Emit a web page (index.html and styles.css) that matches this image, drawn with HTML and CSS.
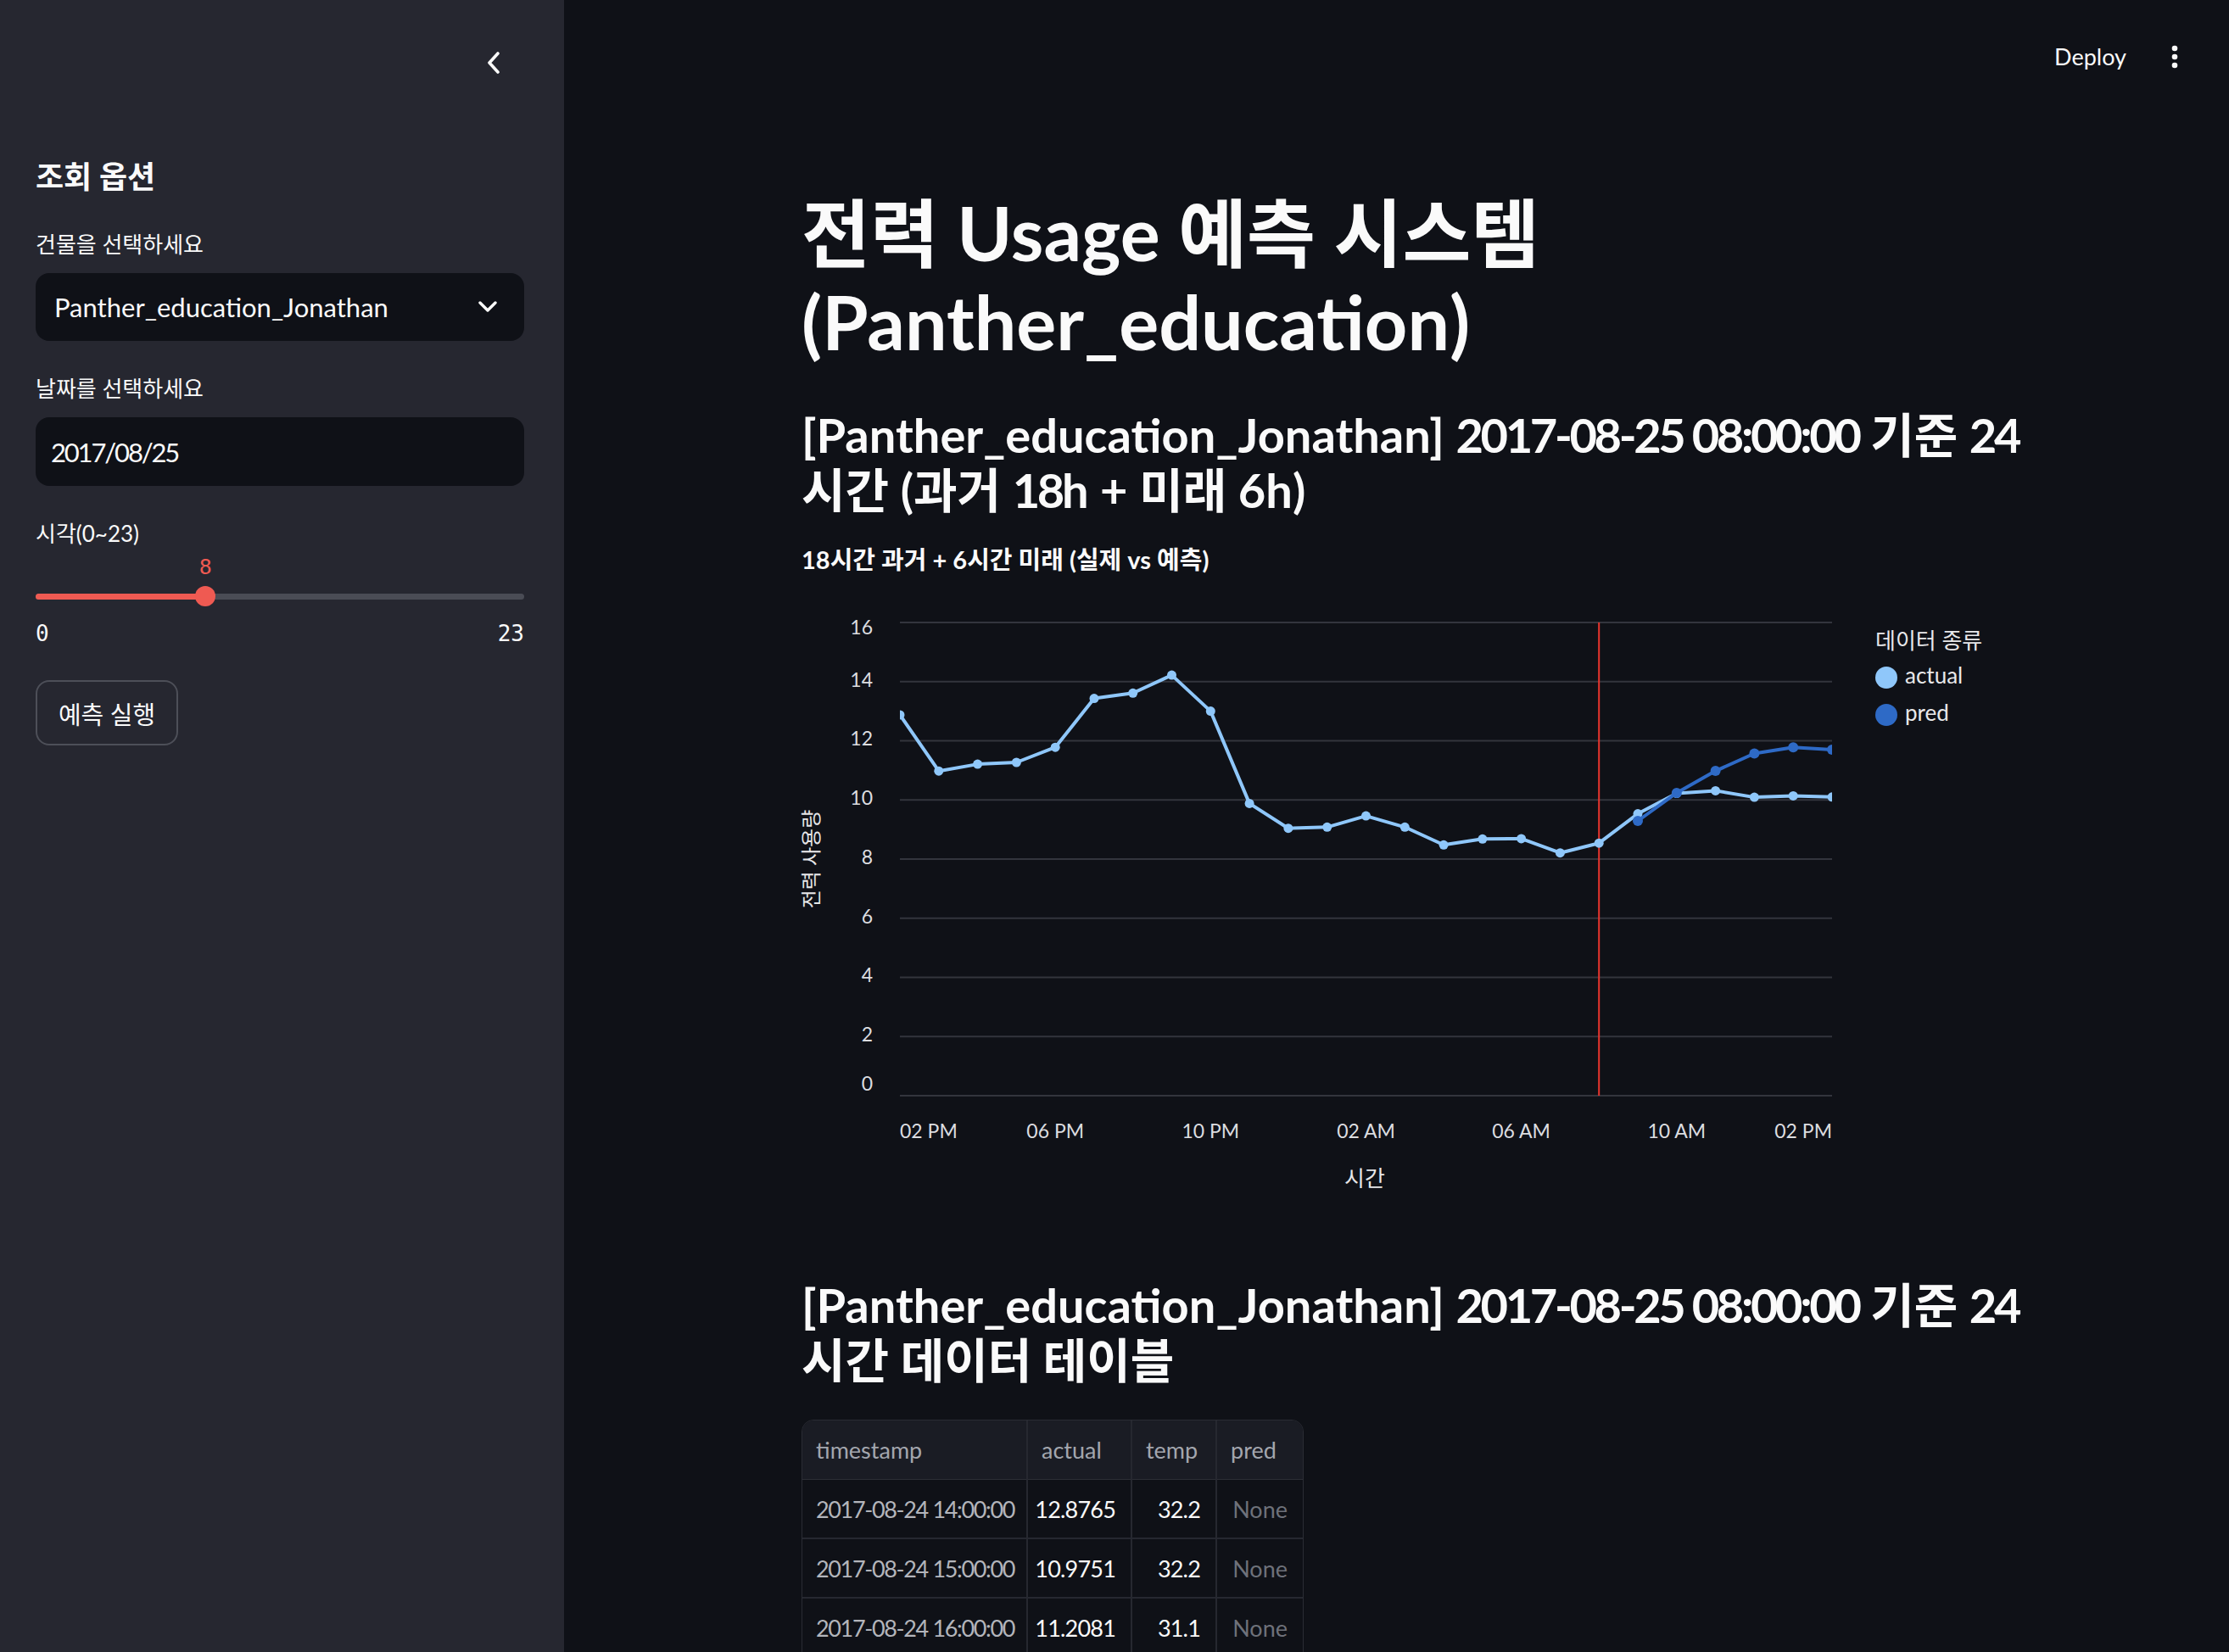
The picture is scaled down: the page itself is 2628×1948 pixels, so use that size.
FILE: index.html
```html
<!DOCTYPE html>
<html lang="ko">
<head>
<meta charset="utf-8">
<title>전력 Usage 예측 시스템</title>
<link rel="stylesheet" href="styles.css">
</head>
<body>
<aside class="sidebar">
  <div class="sb-top">
    <svg class="collapse" width="18" height="26" viewBox="0 0 18 26"><path d="M14 2 L4 13 L14 24" fill="none" stroke="#fafafa" stroke-width="3.6" stroke-linecap="round" stroke-linejoin="round"/></svg>
  </div>
  <div class="sb-title">조회 옵션</div>

  <div class="label">건물을 선택하세요</div>
  <div class="select">
    <span>Panther_education_Jonathan</span>
    <svg width="22" height="14" viewBox="0 0 22 14"><path d="M2 2 L11 11 L20 2" fill="none" stroke="#fafafa" stroke-width="3.4" stroke-linecap="round" stroke-linejoin="round"/></svg>
  </div>

  <div class="label">날짜를 선택하세요</div>
  <div class="date"><span class="date-text">2017/08/25</span></div>

  <div class="label label-slider">시각(0~23)</div>
  <div class="slider">
    <div class="slider-value-row"><span class="slider-value" style="left:34.78%">8</span></div>
    <div class="slider-track-row">
      <div class="track"><div class="fill" style="width:34.78%"></div><div class="thumb" style="left:34.78%"></div></div>
    </div>
    <div class="slider-minmax"><span>0</span><span>23</span></div>
  </div>

  <button class="run-btn">예측 실행</button>
</aside>

<main class="main">
  <header class="topbar">
    <span class="deploy">Deploy</span>
    <svg class="kebab" width="10" height="30" viewBox="0 0 10 30"><circle cx="5" cy="5" r="3.3" fill="#fafafa"/><circle cx="5" cy="15" r="3.3" fill="#fafafa"/><circle cx="5" cy="25" r="3.3" fill="#fafafa"/></svg>
  </header>

  <section class="content">
    <h1 class="title">전력 Usage 예측 시스템<br>(Panther_education)</h1>
    <h3 class="subtitle">[Panther_education_Jonathan] <span class="tnum">2017-08-25 08:00:00</span> 기준 <span class="tnum">24</span><br>시간 (과거 <span class="tnum">18</span>h + 미래 6h)</h3>
    <div class="chart-title">18시간 과거 + 6시간 미래 (실제 vs 예측)</div>

    <svg class="chart" width="1460" height="730" viewBox="-20 0 1460 730">
      <defs>
        <clipPath id="plotclip"><rect x="116" y="0" width="1099" height="600"/></clipPath>
      </defs>
      <g class="grid" stroke="#33353d" stroke-width="2">
        <line x1="116" x2="1215" y1="34" y2="34"/>
        <line x1="116" x2="1215" y1="103.75" y2="103.75"/>
        <line x1="116" x2="1215" y1="173.5" y2="173.5"/>
        <line x1="116" x2="1215" y1="243.25" y2="243.25"/>
        <line x1="116" x2="1215" y1="313" y2="313"/>
        <line x1="116" x2="1215" y1="382.75" y2="382.75"/>
        <line x1="116" x2="1215" y1="452.5" y2="452.5"/>
        <line x1="116" x2="1215" y1="522.25" y2="522.25"/>
        <line x1="116" x2="1215" y1="592" y2="592"/>
      </g>
      <g class="ylabels" text-anchor="end">
        <text x="84" y="42">16</text>
        <text x="84" y="103.75">14</text>
        <text x="84" y="173.5">12</text>
        <text x="84" y="243.25">10</text>
        <text x="84" y="313">8</text>
        <text x="84" y="382.75">6</text>
        <text x="84" y="452.5">4</text>
        <text x="84" y="522.25">2</text>
        <text x="84" y="580">0</text>
      </g>
      <text class="ytitle" transform="translate(14,313) rotate(-90)" text-anchor="middle">전력 사용량</text>
      <g class="xlabels">
        <text x="116" y="636" text-anchor="start">02 PM</text>
        <text x="299.2" y="636" text-anchor="middle">06 PM</text>
        <text x="482.3" y="636" text-anchor="middle">10 PM</text>
        <text x="665.5" y="636" text-anchor="middle">02 AM</text>
        <text x="848.6" y="636" text-anchor="middle">06 AM</text>
        <text x="1031.8" y="636" text-anchor="middle">10 AM</text>
        <text x="1215" y="636" text-anchor="end">02 PM</text>
      </g>
      <text class="xtitle" x="664" y="692" text-anchor="middle">시간</text>

      <line x1="940.2" x2="940.2" y1="34" y2="592" stroke="#e8352e" stroke-width="2"/>

      <g clip-path="url(#plotclip)">
        <polyline fill="none" stroke="#8fc7fa" stroke-width="4" stroke-linejoin="round" points="116,142.9 161.8,209.2 207.6,201.1 253.4,199 299.2,181.2 345,123.6 390.7,117.3 436.5,96.1 482.3,138.6 528.1,247.4 573.9,276.7 619.7,275.3 665.5,262.1 711.3,275.3 757.1,296.3 802.9,289.3 848.6,288.9 894.4,305.7 940.2,294.2 986,259.6 1031.8,235.6 1077.6,232.4 1123.4,240.1 1169.2,238.4 1215,239.8"/>
        <g fill="#8fc7fa">
          <circle cx="116" cy="142.9" r="5.5"/><circle cx="161.8" cy="209.2" r="5.5"/><circle cx="207.6" cy="201.1" r="5.5"/><circle cx="253.4" cy="199" r="5.5"/><circle cx="299.2" cy="181.2" r="5.5"/><circle cx="345" cy="123.6" r="5.5"/><circle cx="390.7" cy="117.3" r="5.5"/><circle cx="436.5" cy="96.1" r="5.5"/><circle cx="482.3" cy="138.6" r="5.5"/><circle cx="528.1" cy="247.4" r="5.5"/><circle cx="573.9" cy="276.7" r="5.5"/><circle cx="619.7" cy="275.3" r="5.5"/><circle cx="665.5" cy="262.1" r="5.5"/><circle cx="711.3" cy="275.3" r="5.5"/><circle cx="757.1" cy="296.3" r="5.5"/><circle cx="802.9" cy="289.3" r="5.5"/><circle cx="848.6" cy="288.9" r="5.5"/><circle cx="894.4" cy="305.7" r="5.5"/><circle cx="940.2" cy="294.2" r="5.5"/><circle cx="986" cy="259.6" r="5.5"/><circle cx="1031.8" cy="235.6" r="5.5"/><circle cx="1077.6" cy="232.4" r="5.5"/><circle cx="1123.4" cy="240.1" r="5.5"/><circle cx="1169.2" cy="238.4" r="5.5"/><circle cx="1215" cy="239.8" r="5.5"/>
        </g>
        <polyline fill="none" stroke="#2e6ac6" stroke-width="4" stroke-linejoin="round" points="986,268 1031.8,234.9 1077.6,209.1 1123.4,188.5 1169.2,181.2 1215,184"/>
        <g fill="#2e6ac6">
          <circle cx="986" cy="268" r="6"/><circle cx="1031.8" cy="234.9" r="6"/><circle cx="1077.6" cy="209.1" r="6"/><circle cx="1123.4" cy="188.5" r="6"/><circle cx="1169.2" cy="181.2" r="6"/><circle cx="1215" cy="184" r="6"/>
        </g>
      </g>

      <g class="legend">
        <text class="legend-title" x="1266" y="58">데이터 종류</text>
        <circle cx="1279" cy="99" r="13" fill="#8fc7fa"/>
        <text x="1301" y="99">actual</text>
        <circle cx="1279" cy="143" r="13" fill="#2e6ac6"/>
        <text x="1301" y="143">pred</text>
      </g>
    </svg>

    <h3 class="subtitle subtitle-table">[Panther_education_Jonathan] <span class="tnum">2017-08-25 08:00:00</span> 기준 <span class="tnum">24</span><br>시간 데이터 테이블</h3>

    <div class="table">
      <div class="th">timestamp</div><div class="th">actual</div><div class="th">temp</div><div class="th">pred</div>
      <div class="td ts">2017-08-24 14:00:00</div><div class="td num">12.8765</div><div class="td num">32.2</div><div class="td num none">None</div>
      <div class="td ts">2017-08-24 15:00:00</div><div class="td num">10.9751</div><div class="td num">32.2</div><div class="td num none">None</div>
      <div class="td ts">2017-08-24 16:00:00</div><div class="td num">11.2081</div><div class="td num">31.1</div><div class="td num none">None</div>
    </div>
  </section>
</main>
</body>
</html>
```

FILE: styles.css
```css
* { box-sizing: border-box; }

html, body {
  margin: 0;
  padding: 0;
}

body {
  width: 2628px;
  height: 1948px;
  overflow: hidden;
  display: flex;
  background: #0f1117;
  color: #fafafa;
  font-family: "Lato", "Noto Sans CJK KR", sans-serif;
}

.tnum {
  letter-spacing: -0.06em;
}

/* ---------- Sidebar ---------- */
.sidebar {
  width: 665px;
  flex: none;
  background: #262730;
  padding: 50px 47px 0 42px;
  display: flex;
  flex-direction: column;
}

.sb-top {
  height: 48px;
  display: flex;
  justify-content: flex-end;
  align-items: center;
  padding-right: 27px;
}

.sb-title {
  margin-top: 86px;
  font-size: 36px;
  font-weight: 700;
  line-height: 48px;
}

.label {
  margin-top: 38px;
  margin-bottom: 16px;
  font-size: 26px;
  line-height: 36px;
  color: #fafafa;
}

.select {
  height: 80px;
  background: #0f1117;
  border-radius: 16px;
  display: flex;
  align-items: center;
  justify-content: space-between;
  padding: 0 32px 0 22px;
  font-size: 31px;
}

.date {
  height: 81px;
  background: #0f1117;
  border-radius: 16px;
  display: flex;
  align-items: center;
  padding: 0 18px;
  font-size: 31px;
}

.date-text {
  letter-spacing: -0.07em;
}

.label-slider {
  margin-bottom: 0;
}

.slider-value-row {
  position: relative;
  height: 43px;
}

.slider-value {
  position: absolute;
  top: 0;
  transform: translateX(-50%);
  font-family: "DejaVu Sans Mono", "Liberation Mono", monospace;
  font-size: 25px;
  line-height: 43px;
  color: #ef5a52;
}

.slider-track-row {
  height: 26px;
  display: flex;
  align-items: center;
}

.track {
  position: relative;
  width: 100%;
  height: 7px;
  border-radius: 4px;
  background: #4a4c55;
}

.fill {
  height: 100%;
  border-radius: 4px;
  background: #ef5a52;
}

.thumb {
  position: absolute;
  top: 50%;
  width: 24px;
  height: 24px;
  border-radius: 50%;
  background: #ef5a52;
  transform: translate(-50%, -50%);
}

.slider-minmax {
  margin-top: 16px;
  height: 30px;
  display: flex;
  justify-content: space-between;
  font-family: "DejaVu Sans Mono", "Liberation Mono", monospace;
  font-size: 26px;
  line-height: 30px;
}

.run-btn {
  margin-top: 40px;
  align-self: flex-start;
  width: 168px;
  height: 77px;
  background: transparent;
  border: 2px solid #4d4f58;
  border-radius: 16px;
  color: #fafafa;
  font-family: "Lato", "Noto Sans CJK KR", sans-serif;
  font-size: 29px;
  padding: 0;
}

/* ---------- Main ---------- */
.main {
  flex: 1;
  display: flex;
  flex-direction: column;
  min-width: 0;
}

.topbar {
  height: 134px;
  flex: none;
  display: flex;
  justify-content: flex-end;
  align-items: center;
  gap: 52px;
  padding-right: 59px;
}

.deploy {
  font-size: 27px;
  line-height: 40px;
}

.content {
  padding: 88px 0 0 280px;
  display: flex;
  flex-direction: column;
  align-items: flex-start;
}

.title {
  margin: 0;
  font-size: 88px;
  line-height: 105px;
  font-weight: 700;
}

.subtitle {
  margin: 48px 0 0;
  font-size: 56px;
  line-height: 65px;
  font-weight: 700;
  white-space: nowrap;
}

.subtitle-table {
  margin-top: 76px;
}

.chart-title {
  margin-top: 32px;
  font-size: 29px;
  line-height: 36px;
  font-weight: 700;
}

.chart {
  margin-top: 22px;
  margin-left: -20px;
  display: block;
  font-family: "Lato", "Noto Sans CJK KR", sans-serif;
}

.chart text {
  dominant-baseline: middle;
}

.ylabels text, .xlabels text {
  font-size: 23px;
  fill: #dcdde0;
}

.ytitle {
  font-size: 24px;
  fill: #e6e6e8;
}

.xtitle {
  font-size: 26px;
  fill: #e6e6e8;
}

.legend text {
  font-size: 26px;
  fill: #e8e8ea;
}

/* ---------- Table ---------- */
.table {
  margin-top: 38px;
  display: grid;
  grid-template-columns: 266px 123px 100px 101px;
  grid-auto-rows: 70px;
  border: 1px solid #2a2c34;
  border-radius: 14px 14px 0 0;
  overflow: hidden;
  font-size: 27px;
}

.th, .td {
  display: flex;
  align-items: center;
  border-right: 2px solid #262830;
  border-bottom: 2px solid #262830;
  padding: 0 16px;
  white-space: nowrap;
}

.th:nth-child(4n), .td:nth-child(4n) {
  border-right: none;
}

.th {
  background: #1a1c24;
  color: #a3a6ae;
  height: 72px;
  border-bottom: 3px solid #2c2e36;
}

.td {
  background: #0f1117;
  color: #fafafa;
}

.ts {
  color: #b3b5bb;
  letter-spacing: -0.05em;
}

.num {
  justify-content: flex-end;
  padding-right: 18px;
  letter-spacing: -0.03em;
}

.none {
  color: #6e717a;
  letter-spacing: 0;
}
```
